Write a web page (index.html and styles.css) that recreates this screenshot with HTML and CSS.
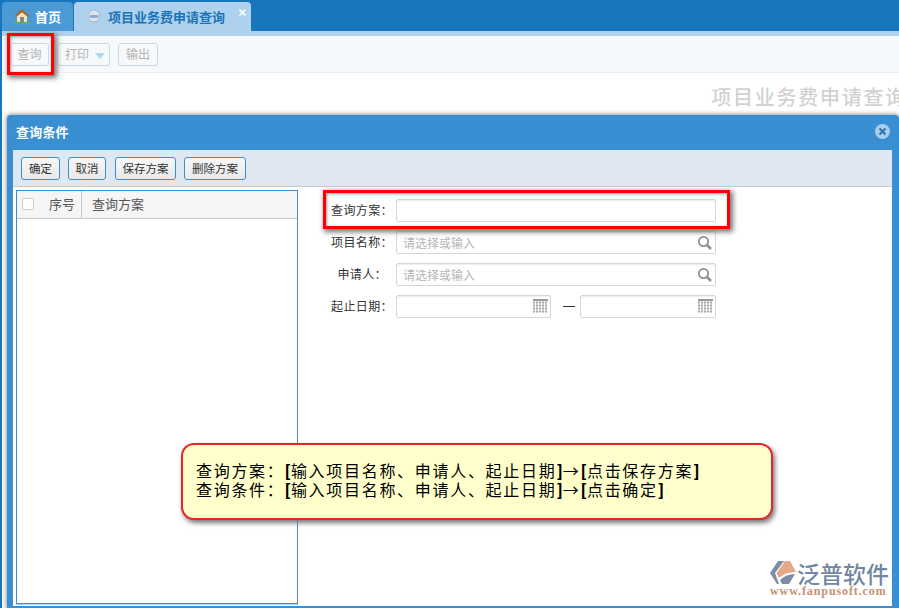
FILE: index.html
```html
<!DOCTYPE html>
<html lang="zh-CN">
<head>
<meta charset="utf-8">
<title>项目业务费申请查询</title>
<link rel="stylesheet" href="styles.css">
</head>
<body>
<div class="app">
  <nav class="tabbar">
    <div class="tab tab-home">
      <svg class="home-icon" width="16" height="16" viewBox="0 0 16 16"><path d="M3 8 L8 4 L13 8 V14 H3 Z" fill="#f3e3c4"/><path d="M8 1 L15.5 8 L13.5 8.8 L8 4.2 L2.5 8.8 L0.5 8 Z" fill="#a9662f"/><rect x="6.2" y="9" width="3.6" height="5" fill="#77807a"/><path d="M0 14 C3 13 4 14 5 14.4 H11 C12 14 13 13 16 14 V15.6 H0 Z" fill="#6fae4a"/></svg>
      <span>首页</span>
    </div>
    <div class="tab tab-active">
      <svg width="14" height="14" viewBox="0 0 14 14"><circle cx="7" cy="7" r="6" fill="#dbe4ee" stroke="#a3b8ce"/><rect x="2.5" y="6" width="9" height="3" rx="1.2" fill="#93aecb"/></svg>
      <span>项目业务费申请查询</span>
      <svg class="tab-close" width="9" height="9" viewBox="0 0 9 9"><path d="M1.5 1.5 L7.5 7.5 M7.5 1.5 L1.5 7.5" stroke="#fff" stroke-width="1.6"/></svg>
    </div>
  </nav>
  <div class="subband"></div>
  <main class="page">
    <div class="toolbar">
      <button class="tool tool-query">查询</button>
      <button class="tool tool-print">打印<i class="caret"></i></button>
      <button class="tool tool-export">输出</button>
    </div>
    <h1 class="page-title">项目业务费申请查询</h1>
  </main>

  <section class="dialog">
    <header class="dialog-head">
      <span>查询条件</span>
      <svg width="17" height="17" viewBox="0 0 17 17"><circle cx="8.5" cy="8.5" r="7.5" fill="#a9cfee"/><path d="M5.5 5.5 L11.5 11.5 M11.5 5.5 L5.5 11.5" stroke="#2f77b4" stroke-width="2.2"/></svg>
    </header>
    <div class="dialog-body">
      <div class="actions">
        <button class="act act-2a">确定</button>
        <button class="act act-2b">取消</button>
        <button class="act act-4a">保存方案</button>
        <button class="act act-4b">删除方案</button>
      </div>
      <div class="split">
        <div class="plan-list">
          <div class="plan-head">
            <div class="col-check"><i class="check"></i></div>
            <div class="col-no"><span>序号</span></div>
            <div class="col-name"><span>查询方案</span></div>
          </div>
        </div>
        <form class="query-form">
          <label class="lbl">查询方案：</label>
          <div class="field field-wide"></div>
          <label class="lbl">项目名称：</label>
          <div class="field field-wide"><span class="hint">请选择或输入</span>
            <svg class="ico" width="16" height="16" viewBox="0 0 16 16"><circle cx="6.5" cy="6.5" r="4.6" fill="none" stroke="#8f8f8f" stroke-width="1.8"/><path d="M10 10 L14 14" stroke="#8f8f8f" stroke-width="2.6"/></svg>
          </div>
          <label class="lbl">申请人：</label>
          <div class="field field-wide"><span class="hint">请选择或输入</span>
            <svg class="ico" width="16" height="16" viewBox="0 0 16 16"><circle cx="6.5" cy="6.5" r="4.6" fill="none" stroke="#8f8f8f" stroke-width="1.8"/><path d="M10 10 L14 14" stroke="#8f8f8f" stroke-width="2.6"/></svg>
          </div>
          <label class="lbl">起止日期：</label>
          <div class="date-range">
            <div class="field field-date1">
              <svg class="ico-cal" width="15" height="14" viewBox="0 0 15 14"><rect width="15" height="2" fill="#999"/><path d="M0 3.5 H15 M0 6.5 H15 M0 9.5 H15 M0 12.5 H15" stroke="#a5a5a5" stroke-width="2" stroke-dasharray="2 1"/></svg>
            </div>
            <span class="dash"></span>
            <div class="field field-date2">
              <svg class="ico-cal" width="15" height="14" viewBox="0 0 15 14"><rect width="15" height="2" fill="#999"/><path d="M0 3.5 H15 M0 6.5 H15 M0 9.5 H15 M0 12.5 H15" stroke="#a5a5a5" stroke-width="2" stroke-dasharray="2 1"/></svg>
            </div>
          </div>
        </form>
      </div>
    </div>
  </section>

  <div class="mark mark-query"></div>
  <div class="mark mark-form"></div>

  <aside class="callout">
    <p>查询方案：<b>[</b>输入项目名称、申请人、起止日期<b>]</b>→<b>[</b>点击保存方案<b>]</b></p>
    <p>查询条件：<b>[</b>输入项目名称、申请人、起止日期<b>]</b>→<b>[</b>点击确定<b>]</b></p>
  </aside>

  <div class="logo">
    <svg width="26" height="24" viewBox="0 0 26 24"><path d="M8 0 H14 L5 12 L9 23 H7 L0 12 Z" fill="#7b8da6"/><path d="M15 0 H20 L26 11 C20 11 13 13 9 17 L6.5 12 Z" fill="#e3a988"/><path d="M10 19 C14 15 19 13 25 13 L19 23 H12 Z" fill="#7b8da6"/></svg>
    <div class="logo-name">泛普软件</div>
    <div class="logo-url">www.fanpusoft.com</div>
  </div>
</div>
</body>
</html>
```
FILE: styles.css
```css
* { box-sizing: border-box; }
html, body { margin: 0; height: 100%; overflow: hidden; background: #fff; }
body { font-family: "Liberation Sans", "Noto Sans CJK SC", sans-serif; font-size: 12px; color: #333; }
.app { position: relative; width: 899px; height: 608px; overflow: hidden; }

.tabbar { display: flex; height: 31px; padding: 2px 0 0 2px; gap: 1px; background: #1876bd; }
.tab { display: flex; align-items: center; height: 29px; padding-bottom: 1px; border-radius: 4px 4px 0 0; font-weight: 700; font-size: 13px; }
.tab-home { width: 71px; padding-left: 12px; gap: 5px; background: #4a9ad6; color: #fff; }
.tab-active { position: relative; width: 177px; padding-left: 13px; gap: 7px; background: #aed1ed; color: #1a73b8; }
.tab-close { position: absolute; top: 6px; right: 4px; }
.subband { height: 5px; margin-left: 2px; background: #aed1ed; }
.page { height: 572px; margin-left: 2px; background: #fff; position: relative; }
.app::before { content: ""; position: absolute; left: 0; top: 31px; bottom: 0; width: 2px; background: #1876bd; }

.toolbar { display: flex; align-items: center; gap: 8px; height: 37px; padding-left: 8px; background: #f6f9fb; border-bottom: 1px solid #eceff2; }
.tool { display: flex; align-items: center; justify-content: center; height: 23px; padding: 0 0 2px; border: 1px solid #c5d8e8; border-radius: 3px; background: #f6f8fa; color: #b4b4b4; font: 12px "Noto Sans CJK SC", sans-serif; }
.tool-query { width: 39px; }
.tool-print { width: 53px; justify-content: flex-start; padding-left: 7px; position: relative; }
.tool-export { width: 40px; }
.caret { position: absolute; right: 4px; top: 9px; border: 5px solid transparent; border-top: 6px solid #a9d8f2; border-bottom: 0; }
.page-title { margin: 11px -8px 0 0; text-align: right; white-space: nowrap; font: 500 20px/26px "Noto Sans CJK SC", sans-serif; letter-spacing: 1.75px; color: #d2d2d2; }

.dialog { position: absolute; left: 7px; top: 115px; right: 0; bottom: 0; display: flex; flex-direction: column; padding: 0 7px 2px 6px; background: #3a8fd3; border-radius: 4px 4px 0 0; box-shadow: 0 0 4px 1px #9a9a9a; }
.dialog-head { display: flex; align-items: center; justify-content: space-between; height: 35px; flex: none; padding: 0 1px 2px 3px; color: #fff; font: 700 13px "Noto Sans CJK SC", sans-serif; }
.dialog-head span { letter-spacing: .2px; }
.dialog-body { flex: 1; display: flex; flex-direction: column; min-height: 0; background: #fff; }
.actions { display: flex; gap: 8px; align-items: center; height: 37px; flex: none; padding-left: 8px; background: #dfe8f1; border-bottom: 1px solid #c6ccd2; }
.act { height: 23px; padding: 0 0 1px; border: 1px solid #3a8fd3; border-radius: 3px; background: linear-gradient(#f7f7f7, #e9e9e9); color: #333; font: 11.5px "Noto Sans CJK SC", sans-serif; }
.act-2a { width: 39px; }
.act-2b { width: 38px; }
.act-4a { width: 61px; margin-left: 1px; }
.act-4b { width: 62px; }
.split { flex: 1; display: flex; min-height: 0; }
.plan-list { width: 282px; margin: 3px 0 2px 3px; border: 1px solid #3a8fd3; box-shadow: 0 1px 0 #a9cfee; background: #fff; }
.plan-head { display: flex; align-items: center; height: 28px; background: #f5f5f5; border-bottom: 1px solid #c8c8c8; color: #555; font: 13px "Noto Sans CJK SC", sans-serif; }
.col-check { width: 30px; padding: 0 0 1px 5px; display: flex; }
.check { width: 12px; height: 12px; border: 1px solid #ccc; border-radius: 2px; background: #fff; }
.col-no { width: 35px; height: 100%; display: flex; align-items: center; padding: 0 0 3px 2px; border-right: 1px solid #c8c8c8; }
.col-name { padding: 0 0 3px 10px; }

.query-form { display: grid; grid-template-columns: 56px 320px; column-gap: 9px; row-gap: 9px; align-content: start; padding: 12px 0 0 33px; font-size: 12px; font-family: "Noto Sans CJK SC", sans-serif; }
.lbl { line-height: 21px; text-align: right; color: #333; white-space: nowrap; letter-spacing: .4px; }
.field { position: relative; height: 23px; display: flex; align-items: center; padding-left: 6px; border: 1px solid #d6d6d6; border-radius: 2px; background: #fff; box-shadow: inset 0 1px 1px #eee; }
.hint { color: #b5b5b5; }
.ico { position: absolute; right: 2px; top: 3px; }
.ico-cal { position: absolute; right: 2px; top: 3px; }
.date-range { display: flex; align-items: center; }
.field-date1 { width: 155px; }
.field-date2 { width: 136px; }
.dash { width: 12px; height: 1px; margin: 0 5px 0 12px; background: #333; }

.mark { position: absolute; border: 3px solid #f00; box-shadow: 2px 2px 5px 1px #777, inset 1px 1px 3px #999; }
.mark-query { left: 7px; top: 33px; width: 47px; height: 42px; }
.mark-form { left: 323px; top: 190px; width: 407px; height: 39px; }

.callout { position: absolute; left: 181px; top: 443px; width: 592px; height: 77px; padding: 16px 0 0 13px; border: 2px solid #e8232a; border-radius: 13px; background: #ffffcc; box-shadow: 2px 3px 5px #777; color: #000; font: 16px/19px "Noto Sans CJK SC", sans-serif; }
.callout p { margin: 0; white-space: nowrap; letter-spacing: 1.7px; }
.callout b { font-weight: 900; letter-spacing: 0; }

.logo { position: absolute; left: 770px; top: 561px; width: 122px; height: 38px; display: grid; grid-template-columns: 26px auto; grid-template-rows: 25px 11px; column-gap: 1px; }
.logo-name { font: 500 23px/25px "Noto Sans CJK SC", sans-serif; color: #7187a3; white-space: nowrap; }
.logo-url { grid-column: 1 / 3; font: 700 12px/11px "Liberation Serif", serif; letter-spacing: .9px; color: #c98f74; white-space: nowrap; }
```
